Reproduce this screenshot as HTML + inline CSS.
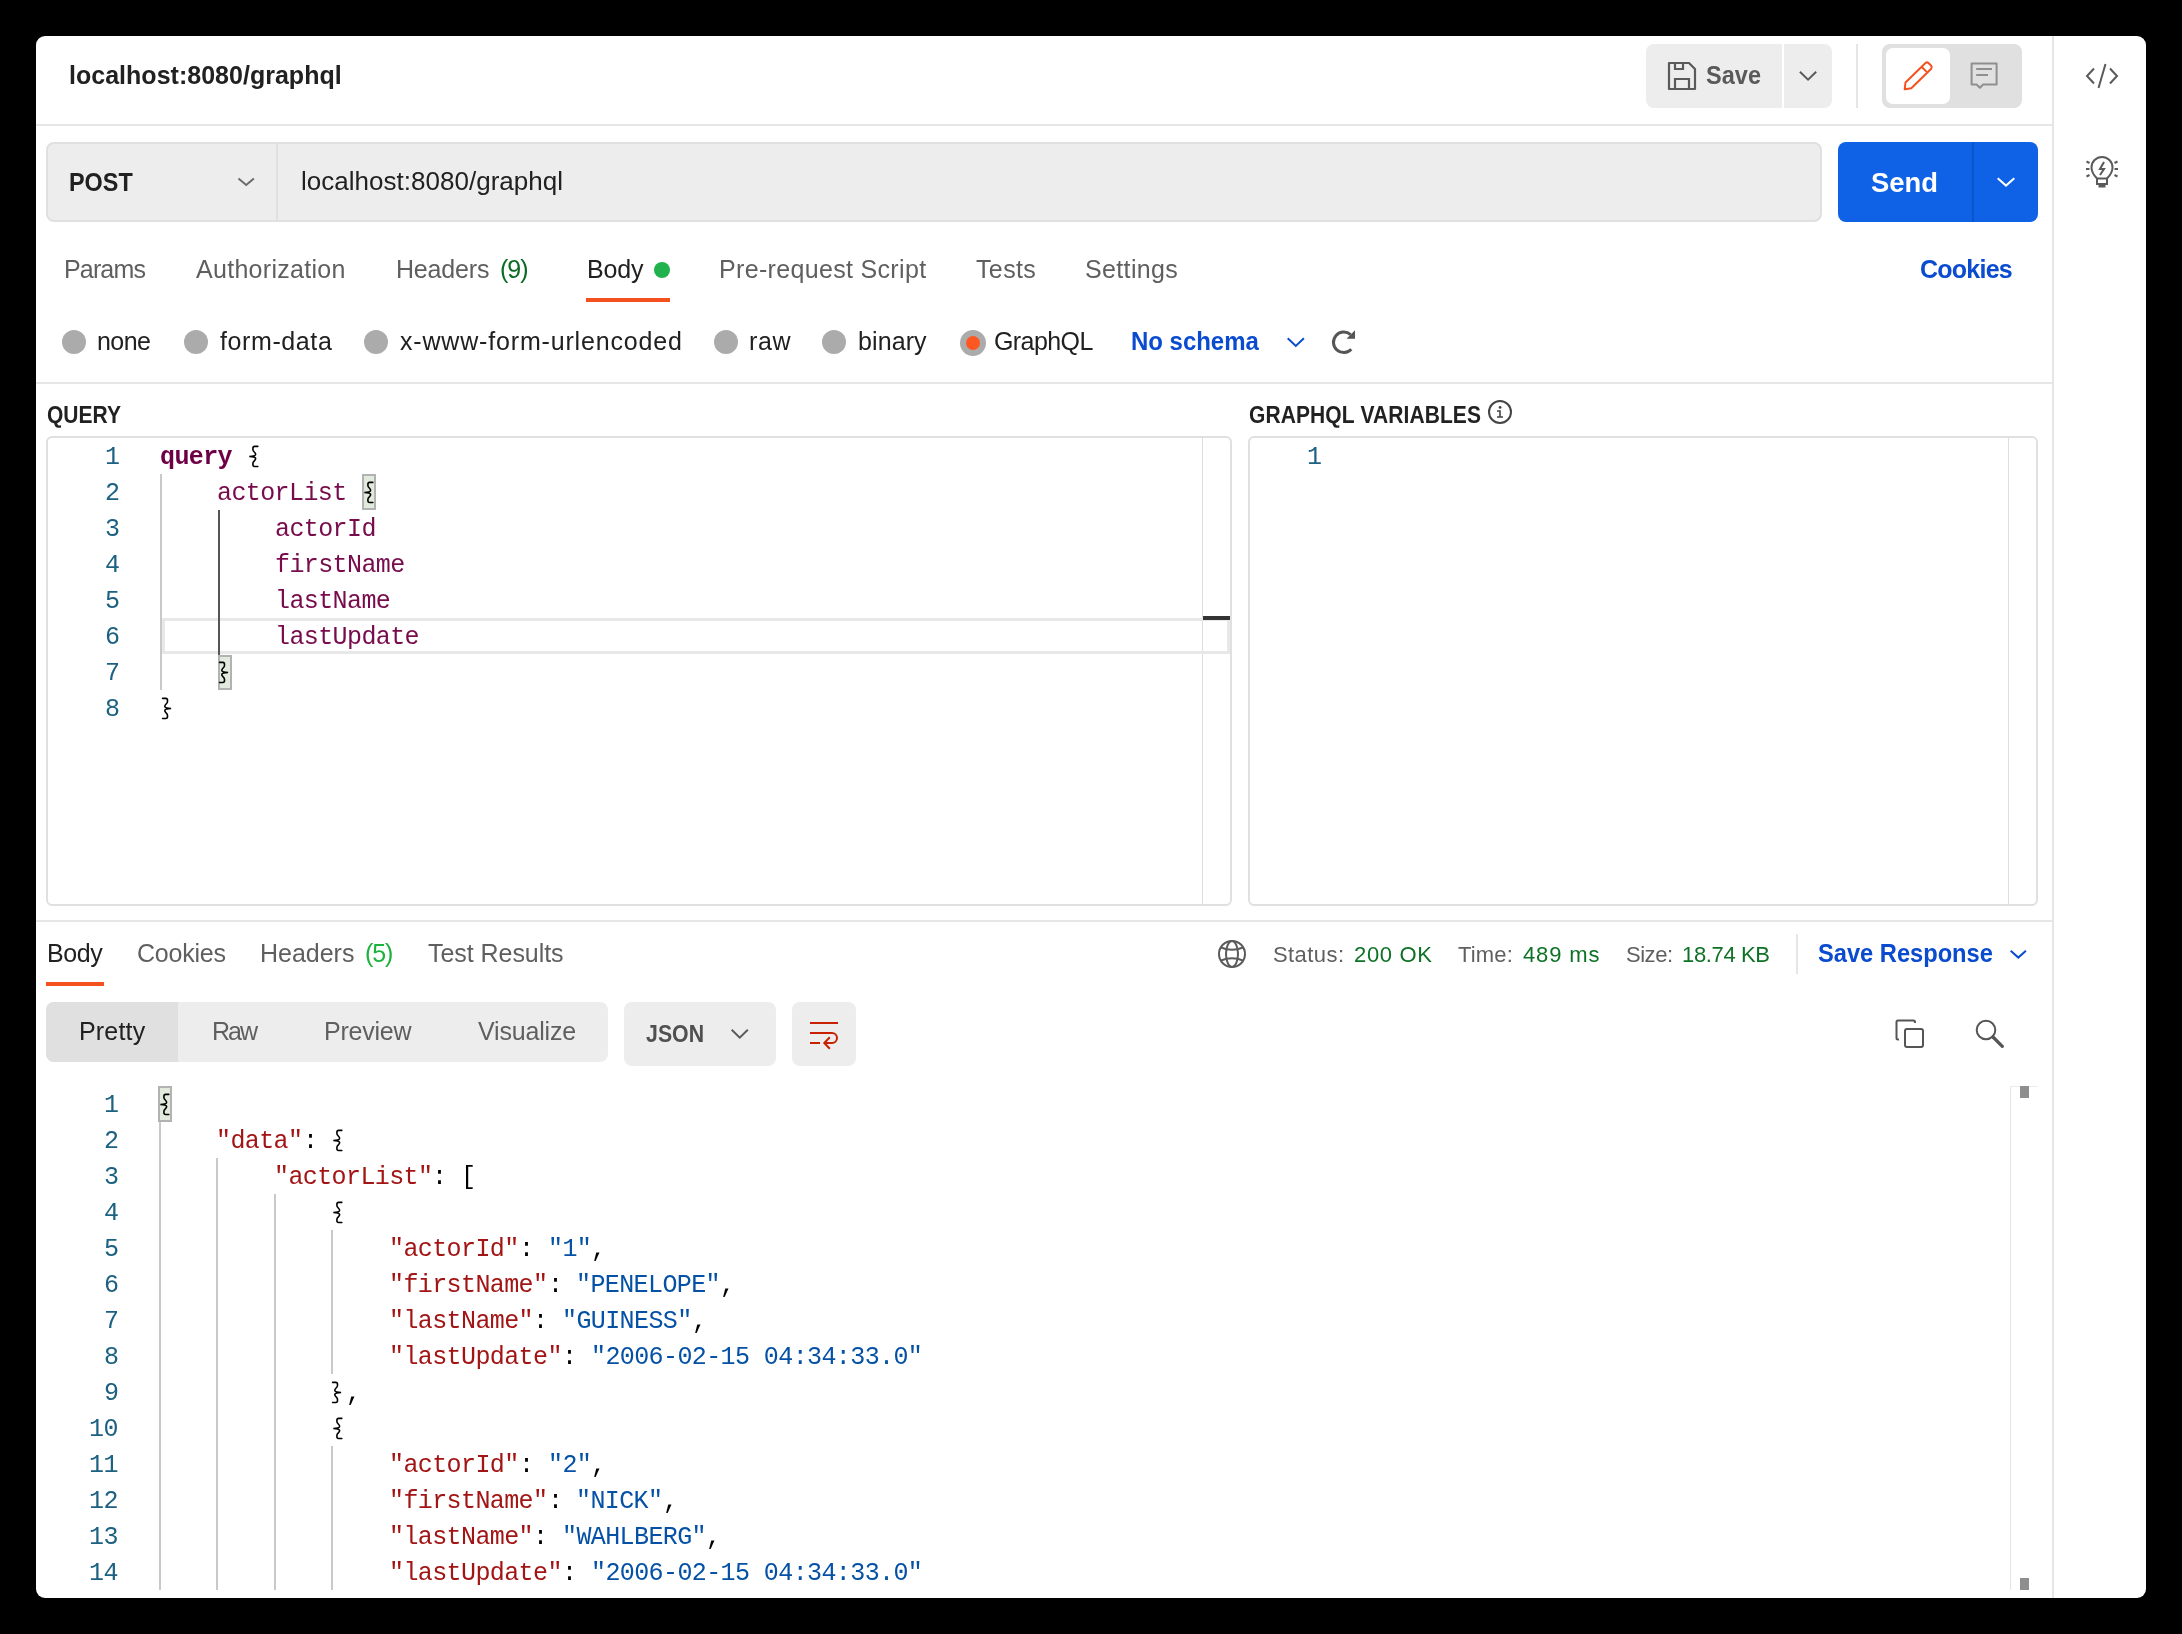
<!DOCTYPE html>
<html><head><meta charset="utf-8"><style>
html,body{margin:0;padding:0;background:#000;width:2182px;height:1634px;overflow:hidden;}
body{position:relative;font-family:"Liberation Sans",sans-serif;}
.t{position:absolute;white-space:pre;line-height:1;will-change:transform;}
.r{position:absolute;}
</style></head><body>
<div class="r" style="left:36px;top:36px;width:2110px;height:1562px;background:#fff;border-radius:9px;"></div>
<div class="r" style="left:36px;top:124px;width:2017px;height:2px;background:#e6e6e6;"></div>
<div class="r" style="left:2052px;top:36px;width:2px;height:1562px;background:#e6e6e6;"></div>
<div class="t" style="left:69.00px;top:62.83px;font-size:25.00px;color:#212121;font-weight:700;letter-spacing:0.019px;">localhost:8080/graphql</div>
<div class="r" style="left:1646px;top:44px;width:136px;height:64px;background:#ededed;border-radius:8px 0 0 8px;"></div>
<div class="r" style="left:1784px;top:44px;width:48px;height:64px;background:#ededed;border-radius:0 8px 8px 0;"></div>
<div class="t" style="left:1706.00px;top:64.70px;font-size:23.50px;color:#5a5a5a;font-weight:700;letter-spacing:0.042px;transform:scaleY(1.080);transform-origin:0 19.90px;">Save</div>
<svg class="r" style="left:1666px;top:60px" width="32" height="32" viewBox="0 0 32 32" fill="none" stroke="#5a5a5a" stroke-width="2.2">
<path d="M3 3 H23 L29 9 V29 H3 Z" stroke-linejoin="round"/>
<path d="M9 3 V9 H17 V3"/>
<path d="M9 29 V19 H23 V29"/>
</svg>
<svg class="r" style="left:1795px;top:67px;" width="25" height="18" viewBox="1795 67 25 18" fill="none" stroke="#5a5a5a" stroke-width="2"><path d="M1799.90 71.70 L1808.05 79.60 L1816.20 71.70"/></svg>
<div class="r" style="left:1856px;top:44px;width:2px;height:64px;background:#e6e6e6;"></div>
<div class="r" style="left:1882px;top:44px;width:140px;height:64px;background:#e0e0e0;border-radius:8px;"></div>
<div class="r" style="left:1886px;top:48px;width:64px;height:56px;background:#fff;border-radius:7px;"></div>
<svg class="r" style="left:1890px;top:50px" width="60" height="52" viewBox="0 0 60 52" fill="none" stroke="#f4511e" stroke-width="2" stroke-linejoin="round">
<path d="M15.5 32.5 L35.5 13 Q37 11.8 38.5 13 L41.2 15.7 Q42.3 17.2 41.2 18.7 L21.3 38.3 L14.7 39.3 Z"/>
<path d="M31.8 17 L36.7 21.9"/>
</svg>
<svg class="r" style="left:1950px;top:50px" width="60" height="52" viewBox="1950 50 60 52" fill="none" stroke="#8f8f8f" stroke-width="2" stroke-linejoin="round">
<path d="M1971.6 63.4 H1996.6 V84.5 H1983.2 L1979.9 87.8 L1976.6 84.5 H1971.6 Z"/>
<path d="M1976.2 69 H1992"/><path d="M1976.2 75 H1988"/>
</svg>
<svg class="r" style="left:2080px;top:56px" width="44" height="40" viewBox="2080 56 44 40" fill="none" stroke="#5a5a5a" stroke-width="2">
<path d="M2094 68.5 L2087 76 L2094 83.5"/><path d="M2110 68.5 L2117 76 L2110 83.5"/><path d="M2105.5 64 L2098.5 88"/>
</svg>
<svg class="r" style="left:2080px;top:150px" width="44" height="44" viewBox="2080 150 44 44" fill="none" stroke="#5a5a5a" stroke-width="2">
<path d="M2097 178.5 Q2091.5 173 2091.5 167.5 A10.5 10.5 0 0 1 2112.5 167.5 Q2112.5 173 2107 178.5"/>
<rect x="2097" y="178.5" width="10" height="5.5"/>
<rect x="2098.5" y="184.5" width="7" height="3" fill="#5a5a5a" stroke="none"/>
<path d="M2104 162 L2100 169 H2104 L2100 175"/>
<path d="M2086.5 161.5 L2089.5 163"/><path d="M2086 169 H2089.5"/><path d="M2086.5 176.5 L2089.5 175"/>
<path d="M2117.5 161.5 L2114.5 163"/><path d="M2118 169 H2114.5"/><path d="M2117.5 176.5 L2114.5 175"/>
</svg>
<div class="r" style="left:46px;top:142px;width:1776px;height:80px;background:#ededed;border:2px solid #e0e0e0;border-radius:8px;box-sizing:border-box;"></div>
<div class="r" style="left:276px;top:144px;width:2px;height:76px;background:#e0e0e0;"></div>
<div class="t" style="left:69.00px;top:172.19px;font-size:23.40px;color:#212121;font-weight:700;letter-spacing:-0.006px;transform:scaleY(1.070);transform-origin:0 19.81px;">POST</div>
<svg class="r" style="left:233px;top:173px;" width="24" height="16" viewBox="233 173 24 16" fill="none" stroke="#6b6b6b" stroke-width="2"><path d="M238.50 178.50 L246.20 185.00 L253.90 178.50"/></svg>
<div class="t" style="left:301.00px;top:167.99px;font-size:26.00px;color:#212121;letter-spacing:0.017px;">localhost:8080/graphql</div>
<div class="r" style="left:1838px;top:142px;width:200px;height:80px;background:#0f62e6;border-radius:8px;"></div>
<div class="r" style="left:1972px;top:142px;width:2px;height:80px;background:#0b55cc;"></div>
<div class="t" style="left:1871.00px;top:168.80px;font-size:27.40px;color:#fff;font-weight:700;letter-spacing:0.002px;transform:scaleY(1.030);transform-origin:0 23.20px;">Send</div>
<svg class="r" style="left:1993px;top:173px;" width="26" height="17" viewBox="1993 173 26 17" fill="none" stroke="#fff" stroke-width="2"><path d="M1997.70 178.20 L2006.00 185.60 L2014.30 178.20"/></svg>
<div class="t" style="left:63.50px;top:257.33px;font-size:25.00px;color:#5f5f5f;letter-spacing:-0.845px;">Params</div>
<div class="t" style="left:195.80px;top:257.33px;font-size:25.00px;color:#5f5f5f;letter-spacing:0.290px;">Authorization</div>
<div class="t" style="left:395.60px;top:257.33px;font-size:25.00px;color:#5f5f5f;letter-spacing:-0.183px;">Headers</div>
<div class="t" style="left:500.00px;top:257.33px;font-size:25.00px;color:#0b6b22;letter-spacing:-1.025px;">(9)</div>
<div class="t" style="left:587.00px;top:257.33px;font-size:25.00px;color:#212121;letter-spacing:-0.192px;">Body</div>
<div class="r" style="left:654px;top:262px;width:16px;height:16px;background:#1fb24d;border-radius:50%;"></div>
<div class="r" style="left:586px;top:298px;width:84px;height:4px;background:#f4511e;"></div>
<div class="t" style="left:719.20px;top:257.33px;font-size:25.00px;color:#5f5f5f;letter-spacing:0.331px;">Pre-request&nbsp;Script</div>
<div class="t" style="left:975.80px;top:257.33px;font-size:25.00px;color:#5f5f5f;letter-spacing:0.362px;">Tests</div>
<div class="t" style="left:1084.70px;top:257.33px;font-size:25.00px;color:#5f5f5f;letter-spacing:0.354px;">Settings</div>
<div class="t" style="left:1920.30px;top:256.83px;font-size:25.00px;color:#0a4bd0;font-weight:700;letter-spacing:-0.758px;">Cookies</div>
<div class="r" style="left:62px;top:330px;width:24px;height:24px;background:#ababab;border-radius:50%;"></div>
<div class="t" style="left:97.30px;top:329.03px;font-size:25.00px;color:#212121;letter-spacing:-0.575px;">none</div>
<div class="r" style="left:184px;top:330px;width:24px;height:24px;background:#ababab;border-radius:50%;"></div>
<div class="t" style="left:219.60px;top:329.03px;font-size:25.00px;color:#212121;letter-spacing:0.600px;">form-data</div>
<div class="r" style="left:364px;top:330px;width:24px;height:24px;background:#ababab;border-radius:50%;"></div>
<div class="t" style="left:399.60px;top:329.03px;font-size:25.00px;color:#212121;letter-spacing:0.822px;">x-www-form-urlencoded</div>
<div class="r" style="left:714.4px;top:330px;width:24.0px;height:24px;background:#ababab;border-radius:50%;"></div>
<div class="t" style="left:748.50px;top:329.03px;font-size:25.00px;color:#212121;letter-spacing:0.575px;">raw</div>
<div class="r" style="left:822.2px;top:330px;width:24.0px;height:24px;background:#ababab;border-radius:50%;"></div>
<div class="t" style="left:857.70px;top:329.03px;font-size:25.00px;color:#212121;letter-spacing:0.100px;">binary</div>
<div class="r" style="left:960px;top:330px;width:26px;height:26px;background:#ff5722;border:6px solid #ababab;border-radius:50%;box-sizing:border-box;"></div>
<div class="t" style="left:994.40px;top:329.03px;font-size:25.00px;color:#212121;letter-spacing:-0.587px;">GraphQL</div>
<div class="t" style="left:1131.00px;top:329.98px;font-size:24.00px;color:#0a4bd0;font-weight:700;letter-spacing:-0.026px;transform:scaleY(1.060);transform-origin:0 20.32px;">No&nbsp;schema</div>
<svg class="r" style="left:1283px;top:333px;" width="25" height="17" viewBox="1283 333 25 17" fill="none" stroke="#0a4bd0" stroke-width="2"><path d="M1287.70 338.30 L1295.80 345.90 L1303.90 338.30"/></svg>
<svg class="r" style="left:1320px;top:320px" width="50" height="45" viewBox="1320 320 50 45" fill="none" stroke="#555" stroke-width="3"><path d="M1351.3 349.3 A10.3 10.3 0 1 1 1350.6 334.6"/><path d="M1355 330.3 V338.8 H1346.5 Z" fill="#555" stroke="none"/></svg>
<div class="r" style="left:36px;top:382px;width:2017px;height:2px;background:#e6e6e6;"></div>
<div class="t" style="left:46.70px;top:404.62px;font-size:21.00px;color:#212121;font-weight:700;letter-spacing:0.025px;transform:scaleY(1.120);transform-origin:0 17.78px;">QUERY</div>
<div class="t" style="left:1248.50px;top:404.62px;font-size:21.00px;color:#212121;font-weight:700;letter-spacing:0.079px;transform:scaleY(1.120);transform-origin:0 17.78px;">GRAPHQL&nbsp;VARIABLES</div>
<svg class="r" style="left:1480px;top:392px" width="40" height="40" viewBox="1480 392 40 40" fill="none" stroke="#444" stroke-width="2"><circle cx="1500" cy="412" r="11"/><path d="M1497 411 H1500 V417 M1497 417 H1503" stroke-width="1.6"/><circle cx="1500.1" cy="407.4" r="1.4" fill="#444" stroke="none"/></svg>
<div class="r" style="left:46px;top:436px;width:1186px;height:470px;border:2px solid #e0e0e0;border-radius:6px;box-sizing:border-box;"></div>
<div class="r" style="left:1202px;top:438px;width:1px;height:466px;background:#dedede;"></div>
<div class="r" style="left:1248px;top:436px;width:790px;height:470px;border:2px solid #e0e0e0;border-radius:6px;box-sizing:border-box;"></div>
<div class="r" style="left:2008px;top:438px;width:1px;height:466px;background:#dedede;"></div>
<div class="r" style="left:162px;top:618px;width:1068px;height:36px;border:3px solid #e8e8e8;box-sizing:border-box;"></div>
<div class="r" style="left:1203px;top:616px;width:27px;height:4px;background:#333;"></div>
<div class="r" style="left:160px;top:474px;width:2px;height:216px;background:#c9c9c9;"></div>
<div class="r" style="left:218px;top:510px;width:2px;height:145px;background:#555;"></div>
<div class="r" style="left:362px;top:474px;width:14px;height:36px;background:#e1eadc;border:2px solid #b2b2b2;box-sizing:border-box;"></div>
<div class="r" style="left:218px;top:655px;width:14px;height:35px;background:#e1eadc;border:2px solid #b2b2b2;box-sizing:border-box;"></div>
<div class="t" style="left:105.10px;top:444.85px;font-size:25.00px;color:#1c6181;font-family:'Liberation Mono',monospace;letter-spacing:-0.6px;">1</div>
<div class="t" style="left:159.50px;top:444.85px;font-size:25px;color:#6d0044;font-family:'Liberation Mono',monospace;letter-spacing:-0.6px;font-weight:700;">query</div>
<svg class="r" style="left:245.90px;top:438.00px;" width="15" height="36" viewBox="0 0 15 36"><path d="M11.8 8.4 H8.6 Q6.9 8.4 6.9 10.4 V11.5 Q6.9 12.8 8.3 14 Q9.8 15.5 9.6 16.6 Q9.2 18.3 3.3 18.45 Q9.2 18.6 9.6 20.3 Q9.8 21.4 8.3 22.9 Q6.9 24.1 6.9 25.4 V26.5 Q6.9 28.5 8.6 28.5 H11.8" fill="none" stroke="#000" stroke-width="1.6" stroke-linecap="round"/></svg>
<div class="t" style="left:105.10px;top:480.85px;font-size:25.00px;color:#1c6181;font-family:'Liberation Mono',monospace;letter-spacing:-0.6px;">2</div>
<div class="t" style="left:217.10px;top:480.85px;font-size:25px;color:#770b4c;font-family:'Liberation Mono',monospace;letter-spacing:-0.6px;">actorList</div>
<svg class="r" style="left:361.10px;top:474.00px;" width="15" height="36" viewBox="0 0 15 36"><path d="M11.8 8.4 H8.6 Q6.9 8.4 6.9 10.4 V11.5 Q6.9 12.8 8.3 14 Q9.8 15.5 9.6 16.6 Q9.2 18.3 3.3 18.45 Q9.2 18.6 9.6 20.3 Q9.8 21.4 8.3 22.9 Q6.9 24.1 6.9 25.4 V26.5 Q6.9 28.5 8.6 28.5 H11.8" fill="none" stroke="#000" stroke-width="1.6" stroke-linecap="round"/></svg>
<div class="t" style="left:105.10px;top:516.85px;font-size:25.00px;color:#1c6181;font-family:'Liberation Mono',monospace;letter-spacing:-0.6px;">3</div>
<div class="t" style="left:274.70px;top:516.85px;font-size:25px;color:#770b4c;font-family:'Liberation Mono',monospace;letter-spacing:-0.6px;">actorId</div>
<div class="t" style="left:105.10px;top:552.85px;font-size:25.00px;color:#1c6181;font-family:'Liberation Mono',monospace;letter-spacing:-0.6px;">4</div>
<div class="t" style="left:274.70px;top:552.85px;font-size:25px;color:#770b4c;font-family:'Liberation Mono',monospace;letter-spacing:-0.6px;">firstName</div>
<div class="t" style="left:105.10px;top:588.85px;font-size:25.00px;color:#1c6181;font-family:'Liberation Mono',monospace;letter-spacing:-0.6px;">5</div>
<div class="t" style="left:274.70px;top:588.85px;font-size:25px;color:#770b4c;font-family:'Liberation Mono',monospace;letter-spacing:-0.6px;">lastName</div>
<div class="t" style="left:105.10px;top:624.85px;font-size:25.00px;color:#1c6181;font-family:'Liberation Mono',monospace;letter-spacing:-0.6px;">6</div>
<div class="t" style="left:274.70px;top:624.85px;font-size:25px;color:#770b4c;font-family:'Liberation Mono',monospace;letter-spacing:-0.6px;">lastUpdate</div>
<div class="t" style="left:105.10px;top:660.85px;font-size:25.00px;color:#1c6181;font-family:'Liberation Mono',monospace;letter-spacing:-0.6px;">7</div>
<svg class="r" style="left:217.10px;top:654.00px;" width="15" height="36" viewBox="0 0 15 36"><path d="M11.8 8.4 H8.6 Q6.9 8.4 6.9 10.4 V11.5 Q6.9 12.8 8.3 14 Q9.8 15.5 9.6 16.6 Q9.2 18.3 3.3 18.45 Q9.2 18.6 9.6 20.3 Q9.8 21.4 8.3 22.9 Q6.9 24.1 6.9 25.4 V26.5 Q6.9 28.5 8.6 28.5 H11.8" fill="none" stroke="#000" stroke-width="1.6" stroke-linecap="round" transform="translate(14.4 0) scale(-1 1)"/></svg>
<div class="t" style="left:105.10px;top:696.85px;font-size:25.00px;color:#1c6181;font-family:'Liberation Mono',monospace;letter-spacing:-0.6px;">8</div>
<svg class="r" style="left:159.50px;top:690.00px;" width="15" height="36" viewBox="0 0 15 36"><path d="M11.8 8.4 H8.6 Q6.9 8.4 6.9 10.4 V11.5 Q6.9 12.8 8.3 14 Q9.8 15.5 9.6 16.6 Q9.2 18.3 3.3 18.45 Q9.2 18.6 9.6 20.3 Q9.8 21.4 8.3 22.9 Q6.9 24.1 6.9 25.4 V26.5 Q6.9 28.5 8.6 28.5 H11.8" fill="none" stroke="#000" stroke-width="1.6" stroke-linecap="round" transform="translate(14.4 0) scale(-1 1)"/></svg>
<div class="t" style="left:1307.10px;top:444.85px;font-size:25.00px;color:#1c6181;font-family:'Liberation Mono',monospace;letter-spacing:-0.6px;">1</div>
<div class="r" style="left:36px;top:920px;width:2017px;height:2px;background:#e6e6e6;"></div>
<div class="t" style="left:47.00px;top:940.83px;font-size:25.00px;color:#212121;letter-spacing:-0.392px;">Body</div>
<div class="r" style="left:46px;top:982px;width:58px;height:4px;background:#f4511e;"></div>
<div class="t" style="left:137.00px;top:940.83px;font-size:25.00px;color:#5f5f5f;letter-spacing:-0.221px;">Cookies</div>
<div class="t" style="left:260.00px;top:940.83px;font-size:25.00px;color:#5f5f5f;letter-spacing:-0.017px;">Headers</div>
<div class="t" style="left:365.00px;top:940.83px;font-size:25.00px;color:#1cb23c;letter-spacing:-1.075px;">(5)</div>
<div class="t" style="left:428.40px;top:940.83px;font-size:25.00px;color:#5f5f5f;letter-spacing:-0.050px;">Test&nbsp;Results</div>
<svg class="r" style="left:1214px;top:936px" width="36" height="36" viewBox="0 0 36 36" fill="none" stroke="#5a5a5a" stroke-width="2"><circle cx="18" cy="18" r="13"/><ellipse cx="18" cy="18" rx="6" ry="13"/><path d="M7 11.5 Q18 16 29 11.5 M7 24.5 Q18 20 29 24.5"/></svg>
<div class="t" style="left:1273.00px;top:943.87px;font-size:22.00px;color:#5f5f5f;letter-spacing:0.419px;">Status:</div>
<div class="t" style="left:1354.00px;top:943.87px;font-size:22.00px;color:#0e7226;letter-spacing:0.680px;">200&nbsp;OK</div>
<div class="t" style="left:1458.00px;top:943.87px;font-size:22.00px;color:#5f5f5f;letter-spacing:0.153px;">Time:</div>
<div class="t" style="left:1523.00px;top:943.87px;font-size:22.00px;color:#0e7226;letter-spacing:0.852px;">489&nbsp;ms</div>
<div class="t" style="left:1625.50px;top:943.87px;font-size:22.00px;color:#5f5f5f;letter-spacing:-0.476px;">Size:</div>
<div class="t" style="left:1682.00px;top:943.87px;font-size:22.00px;color:#0e7226;letter-spacing:-0.358px;">18.74&nbsp;KB</div>
<div class="r" style="left:1796px;top:934px;width:2px;height:40px;background:#e6e6e6;"></div>
<div class="t" style="left:1818.00px;top:942.93px;font-size:23.70px;color:#0a4bd0;font-weight:700;letter-spacing:-0.018px;transform:scaleY(1.050);transform-origin:0 20.07px;">Save&nbsp;Response</div>
<svg class="r" style="left:2006px;top:946px;" width="24" height="17" viewBox="2006 946 24 17" fill="none" stroke="#0a4bd0" stroke-width="2"><path d="M2010.70 950.70 L2018.30 957.60 L2025.90 950.70"/></svg>
<div class="r" style="left:46px;top:1002px;width:562px;height:60px;background:#ededed;border-radius:8px;"></div>
<div class="r" style="left:46px;top:1002px;width:132px;height:60px;background:#e0e0e0;border-radius:8px 0 0 8px;"></div>
<div class="t" style="left:79.40px;top:1018.83px;font-size:25.00px;color:#212121;letter-spacing:0.180px;">Pretty</div>
<div class="t" style="left:211.60px;top:1018.83px;font-size:25.00px;color:#5f5f5f;letter-spacing:-1.937px;">Raw</div>
<div class="t" style="left:324.20px;top:1018.83px;font-size:25.00px;color:#5f5f5f;letter-spacing:-0.233px;">Preview</div>
<div class="t" style="left:477.90px;top:1018.83px;font-size:25.00px;color:#5f5f5f;letter-spacing:-0.175px;">Visualize</div>
<div class="r" style="left:624px;top:1002px;width:152px;height:64px;background:#ededed;border-radius:8px;"></div>
<div class="t" style="left:645.70px;top:1024.67px;font-size:21.30px;color:#505050;font-weight:700;letter-spacing:0.033px;transform:scaleY(1.090);transform-origin:0 18.03px;">JSON</div>
<svg class="r" style="left:727px;top:1025px;" width="25" height="18" viewBox="727 1025 25 18" fill="none" stroke="#5a5a5a" stroke-width="2"><path d="M731.70 1029.70 L739.75 1037.60 L747.80 1029.70"/></svg>
<div class="r" style="left:792px;top:1002px;width:64px;height:64px;background:#ededed;border-radius:8px;"></div>
<svg class="r" style="left:800px;top:1012px" width="48" height="44" viewBox="800 1012 48 44" fill="none" stroke="#c72100" stroke-width="2"><path d="M810 1023 H838"/><path d="M810 1033 H832 A5 5 0 0 1 832 1043 H825"/><path d="M829.8 1037.3 L824.3 1043 L829.8 1048.7"/><path d="M810 1043 H820"/></svg>
<svg class="r" style="left:1890px;top:1014px" width="40" height="40" viewBox="1890 1014 40 40" fill="none" stroke="#555" stroke-width="2"><path d="M1899 1039.5 H1898 Q1896.5 1039.5 1896.5 1038 V1022 Q1896.5 1020.5 1898 1020.5 H1913.5 Q1915 1020.5 1915 1022 V1023"/><rect x="1905" y="1029" width="18" height="18" rx="2"/></svg>
<svg class="r" style="left:1970px;top:1014px" width="40" height="40" viewBox="1970 1014 40 40" fill="none" stroke="#555" stroke-width="2"><circle cx="1986" cy="1030" r="9.3"/><path d="M1993 1037 L2002.3 1046.3" stroke-width="3.2" stroke-linecap="round"/></svg>
<div class="r" style="left:2010px;top:1086px;width:1px;height:504px;background:#e3e3e3;"></div>
<div class="r" style="left:2010px;top:1086px;width:28px;height:1px;background:#ececec;"></div>
<div class="r" style="left:2020px;top:1086px;width:9px;height:12px;background:#8e8e8e;"></div>
<div class="r" style="left:2020px;top:1578px;width:9px;height:12px;background:#8e8e8e;"></div>
<div class="r" style="left:159px;top:1122px;width:2px;height:468px;background:#c9c9c9;"></div>
<div class="r" style="left:216px;top:1158px;width:2px;height:432px;background:#c9c9c9;"></div>
<div class="r" style="left:274px;top:1194px;width:2px;height:396px;background:#c9c9c9;"></div>
<div class="r" style="left:331px;top:1230px;width:2px;height:144px;background:#c9c9c9;"></div>
<div class="r" style="left:331px;top:1446px;width:2px;height:144px;background:#c9c9c9;"></div>
<div class="r" style="left:158px;top:1086px;width:14px;height:36px;background:#e1eadc;border:2px solid #b2b2b2;box-sizing:border-box;"></div>
<div class="clip" style="position:absolute;left:36px;top:1086px;width:1970px;height:504px;overflow:hidden;">
<div class="t" style="left:67.60px;top:6.85px;font-size:25.00px;color:#1c6181;font-family:'Liberation Mono',monospace;letter-spacing:-0.6px;">1</div>
<svg class="r" style="left:121.00px;top:0.00px;" width="15" height="36" viewBox="0 0 15 36"><path d="M11.8 8.4 H8.6 Q6.9 8.4 6.9 10.4 V11.5 Q6.9 12.8 8.3 14 Q9.8 15.5 9.6 16.6 Q9.2 18.3 3.3 18.45 Q9.2 18.6 9.6 20.3 Q9.8 21.4 8.3 22.9 Q6.9 24.1 6.9 25.4 V26.5 Q6.9 28.5 8.6 28.5 H11.8" fill="none" stroke="#000" stroke-width="1.6" stroke-linecap="round"/></svg>
<div class="t" style="left:67.60px;top:42.85px;font-size:25.00px;color:#1c6181;font-family:'Liberation Mono',monospace;letter-spacing:-0.6px;">2</div>
<div class="t" style="left:180.40px;top:42.85px;font-size:25px;color:#a31515;font-family:'Liberation Mono',monospace;letter-spacing:-0.6px;">&quot;data&quot;</div>
<div class="t" style="left:266.80px;top:42.85px;font-size:25px;color:#000;font-family:'Liberation Mono',monospace;letter-spacing:-0.6px;">:</div>
<svg class="r" style="left:293.80px;top:36.00px;" width="15" height="36" viewBox="0 0 15 36"><path d="M11.8 8.4 H8.6 Q6.9 8.4 6.9 10.4 V11.5 Q6.9 12.8 8.3 14 Q9.8 15.5 9.6 16.6 Q9.2 18.3 3.3 18.45 Q9.2 18.6 9.6 20.3 Q9.8 21.4 8.3 22.9 Q6.9 24.1 6.9 25.4 V26.5 Q6.9 28.5 8.6 28.5 H11.8" fill="none" stroke="#000" stroke-width="1.6" stroke-linecap="round"/></svg>
<div class="t" style="left:67.60px;top:78.85px;font-size:25.00px;color:#1c6181;font-family:'Liberation Mono',monospace;letter-spacing:-0.6px;">3</div>
<div class="t" style="left:238.00px;top:78.85px;font-size:25px;color:#a31515;font-family:'Liberation Mono',monospace;letter-spacing:-0.6px;">&quot;actorList&quot;</div>
<div class="t" style="left:396.40px;top:78.85px;font-size:25px;color:#000;font-family:'Liberation Mono',monospace;letter-spacing:-0.6px;">:</div>
<div class="t" style="left:425.20px;top:78.85px;font-size:25px;color:#000;font-family:'Liberation Mono',monospace;letter-spacing:-0.6px;">[</div>
<div class="t" style="left:67.60px;top:114.85px;font-size:25.00px;color:#1c6181;font-family:'Liberation Mono',monospace;letter-spacing:-0.6px;">4</div>
<svg class="r" style="left:293.80px;top:108.00px;" width="15" height="36" viewBox="0 0 15 36"><path d="M11.8 8.4 H8.6 Q6.9 8.4 6.9 10.4 V11.5 Q6.9 12.8 8.3 14 Q9.8 15.5 9.6 16.6 Q9.2 18.3 3.3 18.45 Q9.2 18.6 9.6 20.3 Q9.8 21.4 8.3 22.9 Q6.9 24.1 6.9 25.4 V26.5 Q6.9 28.5 8.6 28.5 H11.8" fill="none" stroke="#000" stroke-width="1.6" stroke-linecap="round"/></svg>
<div class="t" style="left:67.60px;top:150.85px;font-size:25.00px;color:#1c6181;font-family:'Liberation Mono',monospace;letter-spacing:-0.6px;">5</div>
<div class="t" style="left:353.20px;top:150.85px;font-size:25px;color:#a31515;font-family:'Liberation Mono',monospace;letter-spacing:-0.6px;">&quot;actorId&quot;</div>
<div class="t" style="left:482.80px;top:150.85px;font-size:25px;color:#000;font-family:'Liberation Mono',monospace;letter-spacing:-0.6px;">:</div>
<div class="t" style="left:511.60px;top:150.85px;font-size:25px;color:#0451a5;font-family:'Liberation Mono',monospace;letter-spacing:-0.6px;">&quot;1&quot;</div>
<div class="t" style="left:554.80px;top:150.85px;font-size:25px;color:#000;font-family:'Liberation Mono',monospace;letter-spacing:-0.6px;">,</div>
<div class="t" style="left:67.60px;top:186.85px;font-size:25.00px;color:#1c6181;font-family:'Liberation Mono',monospace;letter-spacing:-0.6px;">6</div>
<div class="t" style="left:353.20px;top:186.85px;font-size:25px;color:#a31515;font-family:'Liberation Mono',monospace;letter-spacing:-0.6px;">&quot;firstName&quot;</div>
<div class="t" style="left:511.60px;top:186.85px;font-size:25px;color:#000;font-family:'Liberation Mono',monospace;letter-spacing:-0.6px;">:</div>
<div class="t" style="left:540.40px;top:186.85px;font-size:25px;color:#0451a5;font-family:'Liberation Mono',monospace;letter-spacing:-0.6px;">&quot;PENELOPE&quot;</div>
<div class="t" style="left:684.40px;top:186.85px;font-size:25px;color:#000;font-family:'Liberation Mono',monospace;letter-spacing:-0.6px;">,</div>
<div class="t" style="left:67.60px;top:222.85px;font-size:25.00px;color:#1c6181;font-family:'Liberation Mono',monospace;letter-spacing:-0.6px;">7</div>
<div class="t" style="left:353.20px;top:222.85px;font-size:25px;color:#a31515;font-family:'Liberation Mono',monospace;letter-spacing:-0.6px;">&quot;lastName&quot;</div>
<div class="t" style="left:497.20px;top:222.85px;font-size:25px;color:#000;font-family:'Liberation Mono',monospace;letter-spacing:-0.6px;">:</div>
<div class="t" style="left:526.00px;top:222.85px;font-size:25px;color:#0451a5;font-family:'Liberation Mono',monospace;letter-spacing:-0.6px;">&quot;GUINESS&quot;</div>
<div class="t" style="left:655.60px;top:222.85px;font-size:25px;color:#000;font-family:'Liberation Mono',monospace;letter-spacing:-0.6px;">,</div>
<div class="t" style="left:67.60px;top:258.85px;font-size:25.00px;color:#1c6181;font-family:'Liberation Mono',monospace;letter-spacing:-0.6px;">8</div>
<div class="t" style="left:353.20px;top:258.85px;font-size:25px;color:#a31515;font-family:'Liberation Mono',monospace;letter-spacing:-0.6px;">&quot;lastUpdate&quot;</div>
<div class="t" style="left:526.00px;top:258.85px;font-size:25px;color:#000;font-family:'Liberation Mono',monospace;letter-spacing:-0.6px;">:</div>
<div class="t" style="left:554.80px;top:258.85px;font-size:25px;color:#0451a5;font-family:'Liberation Mono',monospace;letter-spacing:-0.6px;">&quot;2006-02-15&nbsp;04:34:33.0&quot;</div>
<div class="t" style="left:67.60px;top:294.85px;font-size:25.00px;color:#1c6181;font-family:'Liberation Mono',monospace;letter-spacing:-0.6px;">9</div>
<svg class="r" style="left:293.80px;top:288.00px;" width="15" height="36" viewBox="0 0 15 36"><path d="M11.8 8.4 H8.6 Q6.9 8.4 6.9 10.4 V11.5 Q6.9 12.8 8.3 14 Q9.8 15.5 9.6 16.6 Q9.2 18.3 3.3 18.45 Q9.2 18.6 9.6 20.3 Q9.8 21.4 8.3 22.9 Q6.9 24.1 6.9 25.4 V26.5 Q6.9 28.5 8.6 28.5 H11.8" fill="none" stroke="#000" stroke-width="1.6" stroke-linecap="round" transform="translate(14.4 0) scale(-1 1)"/></svg>
<div class="t" style="left:310.00px;top:294.85px;font-size:25px;color:#000;font-family:'Liberation Mono',monospace;letter-spacing:-0.6px;">,</div>
<div class="t" style="left:53.20px;top:330.85px;font-size:25.00px;color:#1c6181;font-family:'Liberation Mono',monospace;letter-spacing:-0.6px;">10</div>
<svg class="r" style="left:293.80px;top:324.00px;" width="15" height="36" viewBox="0 0 15 36"><path d="M11.8 8.4 H8.6 Q6.9 8.4 6.9 10.4 V11.5 Q6.9 12.8 8.3 14 Q9.8 15.5 9.6 16.6 Q9.2 18.3 3.3 18.45 Q9.2 18.6 9.6 20.3 Q9.8 21.4 8.3 22.9 Q6.9 24.1 6.9 25.4 V26.5 Q6.9 28.5 8.6 28.5 H11.8" fill="none" stroke="#000" stroke-width="1.6" stroke-linecap="round"/></svg>
<div class="t" style="left:53.20px;top:366.85px;font-size:25.00px;color:#1c6181;font-family:'Liberation Mono',monospace;letter-spacing:-0.6px;">11</div>
<div class="t" style="left:353.20px;top:366.85px;font-size:25px;color:#a31515;font-family:'Liberation Mono',monospace;letter-spacing:-0.6px;">&quot;actorId&quot;</div>
<div class="t" style="left:482.80px;top:366.85px;font-size:25px;color:#000;font-family:'Liberation Mono',monospace;letter-spacing:-0.6px;">:</div>
<div class="t" style="left:511.60px;top:366.85px;font-size:25px;color:#0451a5;font-family:'Liberation Mono',monospace;letter-spacing:-0.6px;">&quot;2&quot;</div>
<div class="t" style="left:554.80px;top:366.85px;font-size:25px;color:#000;font-family:'Liberation Mono',monospace;letter-spacing:-0.6px;">,</div>
<div class="t" style="left:53.20px;top:402.85px;font-size:25.00px;color:#1c6181;font-family:'Liberation Mono',monospace;letter-spacing:-0.6px;">12</div>
<div class="t" style="left:353.20px;top:402.85px;font-size:25px;color:#a31515;font-family:'Liberation Mono',monospace;letter-spacing:-0.6px;">&quot;firstName&quot;</div>
<div class="t" style="left:511.60px;top:402.85px;font-size:25px;color:#000;font-family:'Liberation Mono',monospace;letter-spacing:-0.6px;">:</div>
<div class="t" style="left:540.40px;top:402.85px;font-size:25px;color:#0451a5;font-family:'Liberation Mono',monospace;letter-spacing:-0.6px;">&quot;NICK&quot;</div>
<div class="t" style="left:626.80px;top:402.85px;font-size:25px;color:#000;font-family:'Liberation Mono',monospace;letter-spacing:-0.6px;">,</div>
<div class="t" style="left:53.20px;top:438.85px;font-size:25.00px;color:#1c6181;font-family:'Liberation Mono',monospace;letter-spacing:-0.6px;">13</div>
<div class="t" style="left:353.20px;top:438.85px;font-size:25px;color:#a31515;font-family:'Liberation Mono',monospace;letter-spacing:-0.6px;">&quot;lastName&quot;</div>
<div class="t" style="left:497.20px;top:438.85px;font-size:25px;color:#000;font-family:'Liberation Mono',monospace;letter-spacing:-0.6px;">:</div>
<div class="t" style="left:526.00px;top:438.85px;font-size:25px;color:#0451a5;font-family:'Liberation Mono',monospace;letter-spacing:-0.6px;">&quot;WAHLBERG&quot;</div>
<div class="t" style="left:670.00px;top:438.85px;font-size:25px;color:#000;font-family:'Liberation Mono',monospace;letter-spacing:-0.6px;">,</div>
<div class="t" style="left:53.20px;top:474.85px;font-size:25.00px;color:#1c6181;font-family:'Liberation Mono',monospace;letter-spacing:-0.6px;">14</div>
<div class="t" style="left:353.20px;top:474.85px;font-size:25px;color:#a31515;font-family:'Liberation Mono',monospace;letter-spacing:-0.6px;">&quot;lastUpdate&quot;</div>
<div class="t" style="left:526.00px;top:474.85px;font-size:25px;color:#000;font-family:'Liberation Mono',monospace;letter-spacing:-0.6px;">:</div>
<div class="t" style="left:554.80px;top:474.85px;font-size:25px;color:#0451a5;font-family:'Liberation Mono',monospace;letter-spacing:-0.6px;">&quot;2006-02-15&nbsp;04:34:33.0&quot;</div>
</div>
</body></html>
